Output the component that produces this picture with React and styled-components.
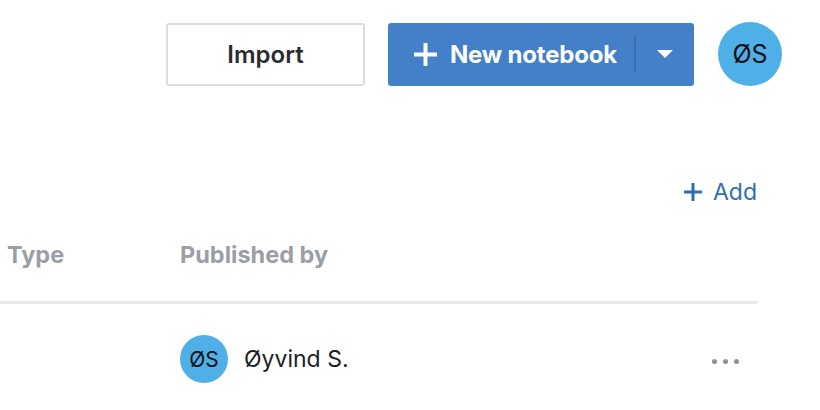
import React from "react";
import styled, { createGlobalStyle } from "styled-components";

const GlobalStyle = createGlobalStyle`
  body {
    margin: 0;
    background: #fff;
    font-family: Inter, "Liberation Sans", sans-serif;
  }
`;

const App = () => {
  return (
    <>
      <GlobalStyle />
      <Page>
        <TopBar>
          <OutlineButton>Import</OutlineButton>
          <SplitButton>
            <MainPart>
              <svg width="25" height="25" viewBox="0 0 25 25">
                <path d="M12.5 1v23M1 12.5h23" stroke="#fff" strokeWidth="4" />
              </svg>
              New notebook
            </MainPart>
            <Divider />
            <CaretPart>
              <svg width="16" height="8" viewBox="0 0 16 8">
                <path d="M0 0h16L8 8z" fill="#fff" />
              </svg>
            </CaretPart>
          </SplitButton>
          <Avatar size={64} fontSize={25}>ØS</Avatar>
        </TopBar>

        <Content>
          <AddRow>
            <AddLink>
              <svg width="18" height="18" viewBox="0 0 18 18">
                <path d="M9 0v18M0 9h18" stroke="#2f6db3" strokeWidth="3" />
              </svg>
              Add
            </AddLink>
          </AddRow>

          <HeaderRow>
            <HeadCell>Type</HeadCell>
            <HeadCell>Published by</HeadCell>
            <HeadCell />
          </HeaderRow>

          <Row>
            <Cell />
            <Cell>
              <Publisher>
                <Avatar size={48} fontSize={21}>ØS</Avatar>
                <Name>Øyvind S.</Name>
              </Publisher>
            </Cell>
            <Cell>
              <Dots>
                <Dot />
                <Dot />
                <Dot />
              </Dots>
            </Cell>
          </Row>
        </Content>
      </Page>
    </>
  );
};

const Page = styled.div`
  width: 820px;
  height: 410px;
  overflow: hidden;
`;

const TopBar = styled.div`
  display: flex;
  justify-content: flex-end;
  align-items: center;
  gap: 23px;
  padding: 22px 38px 0 0;
`;

const OutlineButton = styled.button`
  width: 199px;
  height: 63px;
  box-sizing: border-box;
  border: 2px solid #dcdde0;
  border-radius: 3px;
  background: #fff;
  color: #2b2b33;
  font-family: inherit;
  font-size: 24px;
  font-weight: 600;
`;

const SplitButton = styled.div`
  display: flex;
  align-items: center;
  width: 306px;
  height: 63px;
  background: #4380c8;
  border-radius: 3px;
  color: #fff;
  margin-right: 1px;
`;

const MainPart = styled.div`
  display: flex;
  align-items: center;
  gap: 12px;
  padding-left: 25px;
  font-size: 24px;
  font-weight: 700;
  letter-spacing: -0.2px;
  flex: 1;
`;

const Divider = styled.div`
  width: 2px;
  height: 36px;
  background: #376eb0;
`;

const CaretPart = styled.div`
  display: flex;
  align-items: center;
  justify-content: center;
  width: 58px;
  height: 100%;
`;

const Avatar = styled.div`
  width: ${(p) => p.size}px;
  height: ${(p) => p.size}px;
  border-radius: 50%;
  background: #4fb0e7;
  color: #111;
  display: flex;
  align-items: center;
  justify-content: center;
  font-size: ${(p) => p.fontSize}px;
  flex-shrink: 0;
`;

const Content = styled.div`
  width: 758px;
  margin-top: 91px;
`;

const AddRow = styled.div`
  display: flex;
  justify-content: flex-end;
  padding-right: 1px;
`;

const AddLink = styled.div`
  display: flex;
  align-items: center;
  gap: 11px;
  color: #2f6db3;
  font-size: 23px;
  line-height: 30px;
`;

const HeaderRow = styled.div`
  display: grid;
  grid-template-columns: 172px 1fr 60px;
  margin-top: 33px;
  padding-bottom: 31px;
  border-bottom: 3px solid #e8e9eb;
`;

const HeadCell = styled.div`
  padding-left: 8px;
  color: #9c9ea5;
  font-size: 23.5px;
  font-weight: 700;
  line-height: 30px;
  &:first-child {
    padding-left: 7px;
  }
`;

const Row = styled.div`
  display: grid;
  grid-template-columns: 172px 1fr 60px;
  align-items: center;
  padding-top: 31px;
`;

const Cell = styled.div`
  padding-left: 8px;
`;

const Publisher = styled.div`
  display: flex;
  align-items: center;
  gap: 16px;
`;

const Name = styled.span`
  color: #1e1e24;
  font-size: 23px;
`;

const Dots = styled.div`
  display: flex;
  gap: 6px;
  padding-left: 6px;
  padding-top: 4px;
`;

const Dot = styled.span`
  width: 5px;
  height: 5px;
  border-radius: 50%;
  background: #8f9197;
`;

export default App;
